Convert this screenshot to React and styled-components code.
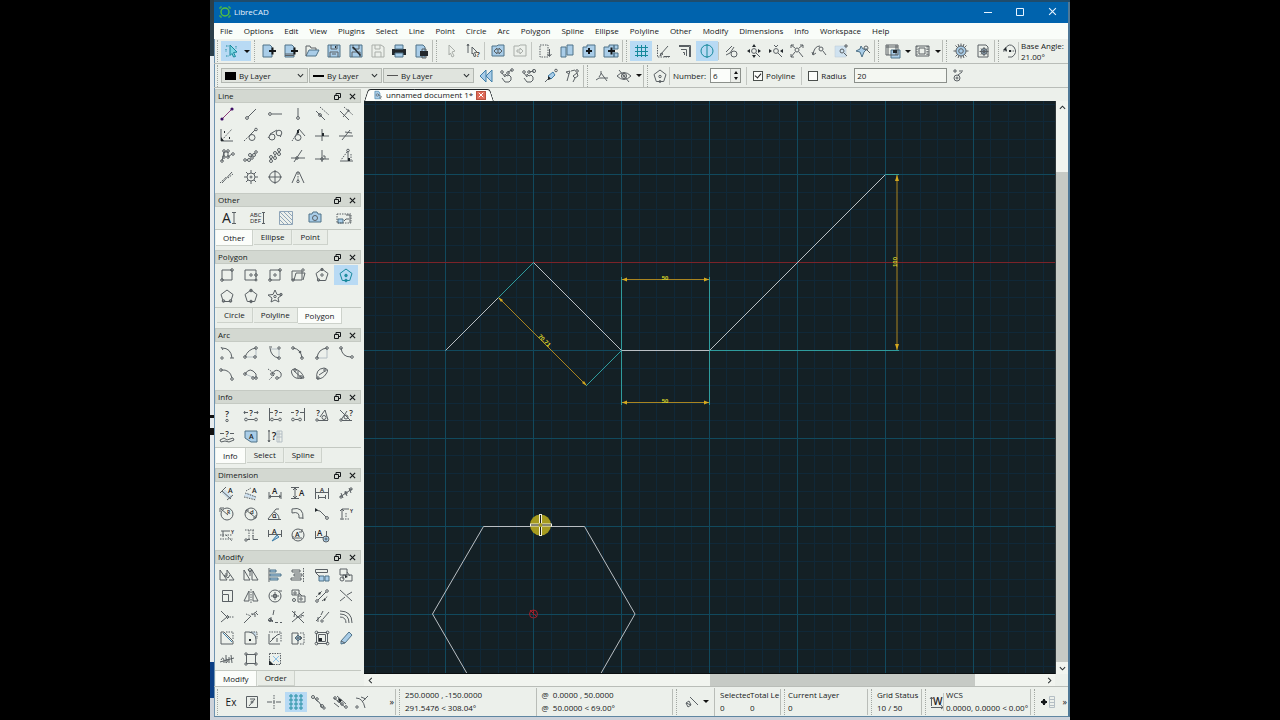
import React from "react";
import styled, { createGlobalStyle, css } from "styled-components";

const GlobalStyle = createGlobalStyle`
  * { box-sizing: border-box; }
  body { margin: 0; background: #000; }
  body, button, input, select {
    font-family: "Open Sans", "Noto Sans", sans-serif;
    font-size: 8px;
    line-height: 12px;
    color: #15181a;
  }
  button { border: 0; padding: 0; margin: 0; background: transparent; }
`;

/* ---------- icon drawings, on a 16 x 16 field ---------- */
/* s: strokes, w: heavy strokes, t: dotted strokes, b: blue shapes, g: blue strokes, k: solid shapes, c: circles */

const PENTAGON = "M8 2L14 6.5L11.7 13.5H4.3L2 6.5Z";
const DOC = "M2 2H9L11 4V14H2Z";
const DISK = "M2 2H14V14H2Z";

const ICONS = {
  cursor: { teal: 1, b: "M6 2L13 9L9.5 9.5L11.5 13.5L9.5 14L8 10.5L6 12.5Z", t: "M2 3H5M2 13H5M12 3V6M2 6V9" },
  newDoc: { b: DOC, w: "M8 8H15M11.5 4.5V11.5" },
  newTemplate: { b: DOC, s: "M2 11H11M2 12.5H11", w: "M8 8H15M11.5 4.5V11.5" },
  open: { b: "M2 13L5 7H15L12 13Z", s: "M2 13V3H6L7 5H12V7" },
  save: { b: DISK, pale: "M5 2H11V6H5Z", s: "M5 2V6H11V2M4 14V9H12V14M6 11H10", k: "M9 3H10V5H9Z" },
  saveAs: { b: DISK, s: "M4 14V9H12V14M5 2V6H11V2", k: "M4 4L6 4L13 12L12 13Z" },
  saveGray: { faint: 1, s: "M2 2H11L14 4V14H2ZM5 14V9H11V14M5 2V6H10V2" },
  print: { k: "M1 6H15V12H1Z", b: "M4 2H12V6H4ZM4 10H12V14H4Z" },
  preview: { b: "M3 2H10L12 4V14H3Z", k: "M7 8H15V13H7Z", s: "M9 8V6H13V8M9 13V15H13V13" },
  pointer: { faint: 1, s: "M6 2L12 8L9 9L11 13L9 14L7.5 10L6 12Z" },
  pointerAsk: { s: "M7 4L12 9L9.5 9.5L11 13L9 13.5L8 10L7 11ZM3 1V10M2 3L3 1L4 3", q: [13, 14, 7] },
  windowSwap: { b: "M2 3H7L8 2H14V13H2Z", s: "M4 8L7 5V7H9V5L12 8L9 11V9H7V11Z" },
  windowGray: { faint: 1, s: "M2 3H7L8 2H14V13H2ZM5 7H8V5L11 8L8 11V9H5Z" },
  selectArea: { t: "M3 2H11V14H3Z", s: "M12.5 6V13M10.5 11L12.5 13.5L14.5 11" },
  layers: { b: "M2 4H7V14H2ZM8 2H14V12H8Z" },
  layerAdd: { b: "M2 4H6V2H14V14H2Z", w: "M5 8H11M8 5V11" },
  layersAdd: { b: "M1 4H6V2H11V14H1ZM11 2H15V6H11ZM11 10H15V14H11Z", w: "M5 8H12M8.5 4.5V11.5" },
  grid: { teal: 1, s: "M4.5 2V14M8.5 2V14M12.5 2V14M2 4.5H15M2 8.5H15M2 12.5H15" },
  draft: { t: "M2.5 2V14H14", s: "M6 11L13 3M5 13L6 10L8 11ZM9 13.5H15" },
  lineWeight: { s: "M2 2.5H13.5V14M2 3.5H12.5V14M4 6.5H9.5V13M6 9.5H7.5V12" },
  halfCircle: { teal: 1, c: [[8, 8, 6]], s: "M8 1V15" },
  zoomRedraw: { s: "M2 9L8 3M2 12L6 10L10 4", c: [[10, 11, 3]] },
  zoomPan: { c: [[8, 8, 2.4]], s: "M10 10L14 14", k: "M8 1L10 4H6ZM1 8L4 6V10ZM15 8L12 6V10ZM8 15L10 12H6Z" },
  zoomIn: { c: [[8, 8, 2.4]], s: "M10 10L14 14M6 2L8 4L10 2", k: "M1 6L4 8L1 10ZM15 6L12 8L15 10Z" },
  zoomAuto: { c: [[8, 7, 2]], s: "M2 2L6 5M14 2L10 5M2 14L6 9M10 9L14 14M2 5V2H5M11 2H14V5M2 11V14H5" },
  zoomPrev: { c: [[10, 6, 2]], s: "M2 12Q3 3 9 3M12 8L15 12M2 12L1 9M2 12L5 10" },
  zoomWindow: { pale: "M2 3H13V14H2Z", c: [[9, 8, 2]], s: "M11 10L14 13M13 1V5M11 3H15" },
  zoomAll: { b: "M6 3L8 6H12L9 9L7 14L5 9L1 8L5 6Z", c: [[11, 5, 2]], s: "M12 7L15 10" },
  saveView: { s: "M1 2H13V12H1ZM3 2V12M11 2V12M1 4H13", b: "M6 7H15V15H6Z", k: "M8 7H12V10H8Z" },
  dockView: { s: "M1 3H14V13H1ZM4 5H10V11H4Z", t: "M2 3V13M12 3V13M13 3V13" },
  gear: { c: [[8, 8, 5], [8, 8, 2.3]], disc: [8, 8, 5], s: "M8 0.5V3M8 13V15.5M0.5 8H3M13 8H15.5M2.5 2.5L4.5 4.5M13.5 2.5L11.5 4.5M2.5 13.5L4.5 11.5M13.5 13.5L11.5 11.5M5 1L6 3.5M11 1L10 3.5M5 15L6 12.5M11 15L10 12.5" },
  docGear: { s: "M3 2H11L13 4V14H3ZM9 4V13M4.5 8.5H13.5M6 5.5L12 11.5M12 5.5L6 11.5", disc: [9, 8.5, 3], c: [[9, 8.5, 3], [9, 8.5, 1]] },
  angle: { s: "M3 6Q7 -1 12 4Q16 10 10 14L6 14", t: "M8 8H14M1 8H5", k: "M1 7L4 4L5 8ZM7 7H9V9H7Z" },

  back: { g: "M8 2L2 8L8 14ZM14 2L8 8L14 14Z" },
  handA: { s: "M3 5L6 9V6L8 8L10 7L12 9V12L10 14H6L3 10M9 4L13 2", c: [[3, 4, 1.3], [13, 2, 1.3], [9, 5, 1.3]] },
  handB: { s: "M3 5L6 9V6L8 8L10 7L12 9V12L10 14H6L3 10M8 4L13 3", c: [[3, 4, 1.3], [13, 3, 1.6], [8, 4, 1.3]] },
  pin: { g: "M5 8L10 4L12 7L8 11Z", s: "M2 14L7 9", c: [[13, 2.5, 1.3]], k: "M5 8L8 11L5 12Z" },
  pins: { s: "M2 4L6 3L5 6ZM5 6L3 13M9 8L13 5L14 8L11 10ZM11 10L9 14M7 3L11 2", c: [[13, 3, 1.3]] },
  cornerDot: { s: "M2 12L5 10H14M7 5L13 13M7 3V6M7 6L5 9" },
  eyeOff: { s: "M1 8Q8 1 15 8Q8 15 1 8M3 2L13 14", c: [[8, 8, 2.6], [8, 8, 1]] },
  pentagon: { s: PENTAGON, c: [[8, 8.5, 1.2], [8, 13.5, 1]] },
  plusMinus: { s: "M3 3H7M9 3H13M5 1V5M8 7L12 4", c: [[7, 10, 3], [7, 10, 1]] },

  line2p: { purple: 1, s: "M3 13L13 3", dots: [[3, 13, 1.6], [13, 3, 1.6]] },
  lineAngle: { s: "M5 11L13 3", c: [[4, 12, 1.4]] },
  lineH: { s: "M5 8H15", c: [[3, 8, 1.4]] },
  lineV: { s: "M8 2V11", c: [[8, 12, 1.4]] },
  parallel: { s: "M2 5L11 14", t: "M6 1L15 9", c: [[6, 9, 1.4]] },
  parallelPt: { s: "M2 5L11 14M5 11L11 4M9 4H11V6", t: "M6 1L15 9" },
  bisector: { s: "M2 2V14H14", t: "M3 13L13 2", k: "M2 10L5 14H2ZM5 4H6V6H5ZM10 10H11V12H10Z" },
  tangent: { c: [[9, 10.5, 3], [13, 2.5, 1.3]], s: "M6 9L12 3", t: "M1 14L6 9" },
  tangent2: { c: [[5, 10, 3], [12, 6, 2.8]], s: "M3 7L10 3", t: "M1 11L4 7M13 10L15 8" },
  tangentOrt: { c: [[8, 10.5, 3]], s: "M6 8L9 2L15 9", t: "M2 14L6 8", k: "M7 3H9V6L7 7Z" },
  orthogonal: { s: "M8 2V14M1 9H15", k: "M8 6H10V9H8Z" },
  relAngle: { s: "M1 9H15M4 13L12 3M7 5L14 6" },
  polyline: { s: "M3 13L5 4M5 4V9M5 4H9V9M9 9L13 6", c: [[3, 13, 1.3], [5, 3, 1.3], [9, 3, 1.3], [9, 9, 1.3], [14, 6, 1.3], [5, 9, 1.3]] },
  chain: { s: "M3 12H5M8 8L9 9M11 6L12 5", c: [[2, 12, 1.3], [6, 12, 1.5], [7, 7, 1.5], [11, 7, 1.5], [13, 4, 1.3], [9, 10, 1.3]] },
  chain2: { s: "M4 12V10M8 9V7M12 5V3", c: [[4, 13, 1.5], [4, 9, 1.5], [8, 10, 1.5], [8, 5, 1.5], [12, 6, 1.5], [12, 2, 1.5]] },
  crossLine: { s: "M1 10H15M4 14L12 2", c: [[7, 10, 1.3]] },
  crossOrt: { s: "M8 2V14M1 11H15M9 8H11V11", c: [[8, 11, 1.3]] },
  perpendicular: { s: "M10 3V13M2 13H15", t: "M9 4L3 12M13 6V12", c: [[10, 2.5, 1.3]], k: "M10 10H12V13H10Z" },
  freeLine: { s: "M3 14L13 3", t: "M1 14L7 8M9 9L14 5" },
  sun: { c: [[8, 8, 4], [8, 8, 1]], s: "M8 1V4M8 12V15M1 8H4M12 8H15M3 3L5 5M13 3L11 5M3 13L5 11M13 13L11 11" },
  target: { c: [[8, 8, 5.5]], s: "M8 1V15M1 8H15" },
  compass: { s: "M2 14L7 3H9L14 14M8 3V6", t: "M8 7V12", c: [[8, 12.5, 1.2]] },

  textA: { thin: 1, letter: ["A", 1, 13, 14], s: "M11 2.5H15M13 2V14M11 13.5H15" },
  mtext: { thin: 1, letter: ["ABC", 0, 7, 6], letter2: ["DEF", 0, 13, 6], s: "M12 2.5H15M13.5 2V14M12 13.5H15" },
  hatch: { soft: 1, s: "M1.5 1.5H14.5V14.5H1.5ZM2 2L14 14M6 2L14 10M10 2L14 6M2 6L10 14M2 10L6 14" },
  camera: { b: "M2 4H5L6 2H10L11 4H14V12H2Z", c: [[8, 8, 2.5]] },
  insert: { t: "M1 4H15V13H1Z", b: "M2 9H7V13H2Z", s: "M10 5H14M14 5V13M8 11L10 9H13" },

  rect: { s: "M3 3H13V13H3Z", c: [[13, 3, 1.3], [3, 13, 1.3]] },
  rectCenter: { s: "M2 3H13V13H2Z", c: [[8, 8, 1.2], [13, 8, 1.3], [13, 13, 1]] },
  rectDot: { s: "M3 3H13V13H3Z", c: [[8, 8, 1.2], [13, 3, 1.3], [3, 13, 1.3]] },
  rectSlant: { s: "M2 4H12V13H2ZM4 13L6 6H15L13 13", c: [[13, 3, 1.2], [3, 13, 1.2]] },
  polyCorner: { s: PENTAGON, c: [[8, 8, 1.2], [8, 2.5, 1.2], [4.5, 13, 1.2]] },
  polyActive: { teal: 1, s: PENTAGON, c: [[8, 8.5, 1.3], [8, 13.5, 1.3]], dots: [[8, 8.5, 1]] },
  polySide: { s: PENTAGON, c: [[4.5, 13, 1.3], [11.5, 13, 1.3]] },
  polyVert: { s: PENTAGON, c: [[8, 2.5, 1.3], [8, 13.5, 1.3]] },
  star: { s: "M8 2L10 6.5L15 7L11 10L12 14L8 12L4 14L5 10L1 7L6 6.5Z", c: [[8, 8.5, 1.2], [14, 6.5, 1.2]] },

  arc1: { s: "M3 3Q12 3 13 13M2 2L4 5M11 13H15", c: [[3, 13, 1.2]] },
  arc2: { s: "M2 12Q5 4 13 3", faintLine: "M2 12H13V4", c: [[13, 3, 1.3], [12, 12, 1.3], [2, 12, 1.3]] },
  arc3: { s: "M3 3Q4 12 12 13M2 2H5", faintLine: "M4 4H12V11", c: [[12, 3, 1.2], [12, 13, 1.3]] },
  arc4: { s: "M3 3Q11 4 12 13", c: [[3, 3, 1.3], [12, 13, 1.3]], dots: [[10, 7, 1.3]] },
  arc5: { s: "M3 13Q4 4 13 3", faintLine: "M3 13H13V4", c: [[13, 3, 1.3], [3, 13, 1.3]] },
  arc6: { s: "M3 3Q4 12 13 12", c: [[3, 3, 1.3], [14, 12, 1.3]] },
  arc7: { s: "M2 4Q11 3 13 12", c: [[2, 4, 1.3], [13, 13, 1.3]] },
  arc8: { s: "M2 8Q7 0 13 8L13 12", faintLine: "M2 8L12 12", c: [[2, 8, 1.3], [13, 12, 1.3], [10, 12, 1.3]] },
  arc9: { s: "M5 8Q9 1 14 7Q15 12 11 12", t: "M1 3L8 8L2 14", c: [[5, 8, 1.3], [10, 12, 1.3]] },
  arc10: { s: "M2 8Q0 3 5 3Q12 5 14 12Q4 14 2 8M4 5L12 12M8 5V12", c: [[5, 4, 1.3], [11, 11, 1.3]] },
  arc11: { s: "M3 13Q1 3 10 2Q16 3 12 8Q9 13 3 13M5 9L11 5", c: [[11, 4, 1.2], [4, 12, 1.2]] },

  ask: { q: [8, 10, 9], c: [[8, 13.5, 1.2]] },
  askDist: { q: [8, 9, 8], s: "M5 12.5H11M1 5.5H5M11 5.5H15M2 4L1 5.5L2 7M14 4L15 5.5L14 7", c: [[3, 12.5, 1.4], [13, 12.5, 1.4]] },
  askLeft: { q: [9, 9, 8], s: "M2.5 1V14M3 5.5H6M7 12.5H11M12 5.5H15", c: [[5, 12.5, 1.4], [13, 12.5, 1.4]] },
  askRight: { q: [7, 9, 8], s: "M14.5 1V14M10 5.5H14M5 12.5H8M1 5.5H4", c: [[3, 12.5, 1.4], [10, 12.5, 1.4]] },
  askAngle: { q: [4, 9, 8], s: "M4 13.5H14M6 10L11 3L14 13", c: [[3, 13, 1.2], [10, 10.5, 2]] },
  askAngle2: { q: [13, 9, 8], s: "M2 3L12 13M3 13L9 4M4 13.5H14", c: [[3, 13, 1.2], [8, 10, 2]] },
  askArea: { q: [8, 9, 8], s: "M1 12L5 10L8 12L14 10L15 12L10 14L6 13L2 14ZM1 5.5H5M11 5.5H15" },
  askBlue: { b: "M2 3H14V14H8L2 10Z", letter: ["A", 6, 11, 7] },
  askList: { q: [7, 12, 10], s: "M2 2V14M1 12L2 14L3 12M1 3H3", faintLine: "M10 3H15V14H10ZM10 6H15M10 9H15M12 3V14" },

  dimAlign: { letter: ["A", 9, 8, 7], pale: "M3 8L6 5L13 12L10 14Z", s: "M1 8L7 2M3 6L12 14M8 15L14 10" },
  dimAlign2: { letter: ["A", 9, 8, 7], pale: "M1 11L4 8L13 12L12 14Z", t: "M2 8L13 12M3 6L8 3M1 12L13 15" },
  dimH: { letter: ["A", 5, 9, 8], s: "M2 7V14M14 7V14M2 11.5H14M4 10L2 11.5L4 13M12 10L14 11.5L12 13" },
  dimV: { letter: ["A", 9, 11, 8], s: "M1 2.5H9M1 13.5H9M5 3V13M3 5L5 3L7 5M3 11L5 13L7 11" },
  dimBase: { letter: ["A", 6, 7, 6], s: "M1.5 3V14M14.5 3V14M1 7.5H15M4.5 10V14M11.5 10V14M4 12.5H12" },
  dimCont: { s: "M2 12L14 4M3 8L5 13M7 6L9 11M11 3L13 8", c: [[3, 12, 1.2], [13, 4, 1.2], [8, 8, 1.2]] },
  dimRadius: { c: [[8, 8, 6]], s: "M2 3L9 9M1 6V2H5", letter: ["R", 8, 8, 5] },
  dimDia: { c: [[8, 8, 6]], s: "M3 4L13 12M3 7V4H6M10 12H13V9", letter: ["d", 7, 8, 6] },
  dimAngle: { s: "M1 13.5H14M1 13L9 3M7 6Q12 8 12 13M9 3H12", letter: ["α", 5, 12, 7] },
  dimArc: { s: "M2 3Q14 0 13 13M2 7Q10 5 9 12M2 3V7M9 12H13" },
  leader: { s: "M1 4L6 5L12 11", c: [[13, 12, 1.4]], k: "M1 2L4 4L1 6Z" },
  ordinate: { s: "M4 14V3H11M2 5L4 3L6 5", t: "M2 13H12M8 7V12", letter: ["Y", 12, 7, 5] },
  ordinate2: { s: "M2 4H11M4 4V10", t: "M1 8H13M1 12H14M7 8L13 14", letter: ["Y", 12, 7, 5] },
  ordinate3: { t: "M2 3H12M6 3V13M10 3V9", s: "M10 8V12.5H15M4 12.5H7", c: [[3, 13, 1.2]] },
  dimEdit: { letter: ["A", 5, 7, 7], s: "M1.5 3V10M14.5 3V10M1 7.5H15", g: "M5 14L10 8L12 10L7 13Z" },
  dimCycle: { letter: ["A", 5, 10, 7], c: [[8, 8, 6]], s: "M4 11H12M12 2V5H9M3 12V9" },
  dimGear: { letter: ["A", 3, 9, 8], s: "M1.5 4V12M12.5 4V10M1 10.5H9", disc: [12, 12, 3], c: [[12, 12, 3], [12, 12, 1]] },

  move: { s: "M1 3V13H8ZM8 3V9M8 3L15 13H10M5 8L9 11L11 8M7 6V10" },
  copyTo: { s: "M1 3V13H7ZM9 3L15 13H9ZM5 2L7 5L9 2M7 5V9", c: [[7, 3, 1.5]] },
  alignLeft: { b: "M3 3H9V5H3ZM3 7H14V9H3ZM3 11H11V13H3Z", s: "M2 1V15" },
  alignRight: { s: "M2 3H10V5H2ZM4 7H12V9H4ZM1 11H11V13H1Z", t: "M13.5 1V15" },
  alignRef: { s: "M1.5 2.5H13.5V5.5H1.5ZM2 6L6 10", b: "M5 9H10V14H5ZM11 9H15V14H11Z" },
  shapes: { s: "M2 2H9V8H2ZM5 12V8H14V14H7M9 5L12 9", c: [[4, 12, 2]], k: "M7 8L10 10L7 11Z" },
  scale: { s: "M3.5 2.5H13.5V13.5H3.5M3.5 6.5H9.5V13.5H3.5ZM3.5 2.5V6" },
  mirror: { s: "M1 13L6 3V13ZM15 13L10 3V13Z", t: "M8 1V15" },
  rotate: { c: [[8, 8, 6]], s: "M4 8H12M8 4V12M6.5 6.5H9.5V9.5H6.5ZM12 3H15" },
  shapes2: { s: "M2 2H9V7H2ZM8 8H15V14H8ZM9 5L12 8", c: [[5, 5, 1.2], [4, 12, 1.5], [11, 11, 1.2]] },
  revert: { s: "M4 12L12 4", t: "M2 9L8 3M8 13L14 8", c: [[3, 13, 1.3], [13, 3, 1.3]], k: "M4 5L7 4L6 7ZM9 12L12 10L11 13Z" },
  trim: { s: "M2 2L14 13M2 13L7 9M9 7L14 4" },
  trim2: { s: "M2 2L8 8L2 13M8 6L10 8L8 10", t: "M8 8H15" },
  lengthen: { s: "M1 14L8 7M8 5H12V8M12 3L15 6", t: "M3 5L8 7M9 6L14 2" },
  offset: { s: "M7 1L6 6M2 9L6 13M4 8V13M1 11.5H6M8 13.5H11M13 13.5H15", c: [[3, 11, 1.5]] },
  stretch: { s: "M2 2L14 14M2 13L14 3M5 2L4 8M11 6L14 7M6 8H12" },
  divide: { s: "M2 12L7 7M9 10L15 3M7 6L9 2M4 8V13", c: [[8, 12, 1.2]] },
  parallelArc: { s: "M2 2Q14 2 14 14M2 5Q11 5 11 14M2 8Q8 8 8 14" },
  bevel: { g: "M4 3L13 12", s: "M2 2H5L14 11V14H2Z", t: "M7 2H14V9" },
  round: { pale: "M6 2H13V9Q12 3 6 2Z", s: "M2 2H6Q13 3 13 10V14H2Z", k: "M6 9H8V11H6Z", t: "M8 2H14V9" },
  explode: { s: "M2 4V14H13M3 12L10 5L13 4M5 9L8 7M10 8V12", t: "M2 2H14V12" },
  splitBox: { s: "M2 3H8V14H2ZM5 8H12M10 6L12 8L10 10", b: "M8 5L11 8L8 11L5 8Z", t: "M10 3H14V14H10" },
  boxDots: { s: "M3 2.5H13M3 13.5H13M2.5 3V13M13.5 3V13M4.5 4.5H11.5V11.5H4.5Z", c: [[2.5, 2.5, 1.4], [13.5, 2.5, 1.4], [2.5, 13.5, 1.4], [13.5, 13.5, 1.4]], k: "M5 8H8V11H5Z" },
  eraser: { b: "M3 11L11 2L14 5L7 13L3 14Z", s: "M3 11L7 13" },
  textPath: { s: "M2 9Q4 5 5 9V12M7 4V12Q11 9 7 8M10 6V12M12 4L13 12M1 11L15 7" },
  boxNodes: { s: "M3.5 3.5H12.5V12.5H3.5Z", c: [[3, 3, 1.2], [13, 3, 1.2], [3, 13, 1.2], [13, 13, 1.2]] },
  boxCross: { t: "M2.5 2.5H13.5V13.5H2.5Z", sky: "M6 5L12 11M12 5L6 11", k: "M2 9L7 14H2Z" },

  snapBox: { s: "M2.5 2.5H13.5V13.5H2.5ZM5 12L11 5M6 5H11", c: [[8, 8, 1]] },
  snapCross: { t: "M8 1V15", s: "M1 8H6M10 8H15M8 7V9" },
  snapGrid: { teal: 1, c: [3, 8, 13].flatMap((x) => [2, 6, 10, 14].map((y) => [x, y, 1.2])) },
  snapEnd: { s: "M4 3L7 7L9 8L12 13", c: [[3, 3, 1.5], [7, 5, 1.3], [12, 12, 1.5], [14, 14, 1.2]] },
  snapEntity: { s: "M2 4L13 13M5 2L14 10M2 9L7 13", c: [[3, 4, 1.3], [7, 7, 1.3], [10, 10, 1.3], [14, 13, 1.3]], k: "M6 4L10 6L8 9Z" },
  snapMid: { s: "M2 4Q9 4 11 14M14 2L8 8M7 3L12 5", c: [[3, 13, 1.2]] },
  snapNone: { s: "M7 3L15 11M3 9L6 7L8 11L5 13ZM3 9L8 11" },
  wcs: { s: "M2.5 12V3M2 13.5H14M1 5L2.5 3L4 5M12 11L14 13.5L12 15", letter: ["W", 4, 11, 10] },
  addList: { w: "M1 8H7M4 5V11", k: "M4 5L7 8L4 11L1 8Z", faintLine: "M9.5 2.5H14.5V13.5H9.5ZM9 5.5H15M9 8.5H15M9 11.5H15" },
  docTab: { g: "M3 2H9L11 5V14H3Z", s: "M8 7L14 11L11 12L13 15", c: [[7, 8, 2]] },
};

const IconSvg = styled.svg`
  overflow: visible;
`;

function Icon({ name, size = 16 }) {
  const i = ICONS[name];
  const ink = i.teal ? "#16899c" : i.purple ? "#8a3a78" : i.faint ? "#a9aea9" : i.soft ? "#8fa5b8" : "#5a6064";
  const blue = "#a9cde8";
  const circle = ([x, y, r], k, fill) => <circle key={k} cx={x} cy={y} r={r} fill={fill} />;
  return (
    <IconSvg width={size} height={size} viewBox="0 0 16 16" fill="none" stroke={ink} strokeWidth="1" aria-hidden="true">
      {i.pale && <path d={i.pale} fill="#cfe2f0" stroke="#b9c9d4" strokeWidth="0.5" />}
      {i.faintLine && <path d={i.faintLine} stroke="#b4bec4" />}
      {i.disc && <circle cx={i.disc[0]} cy={i.disc[1]} r={i.disc[2]} fill={blue} stroke="none" />}
      {i.k && name === "print" && <path d={i.k} fill="#22282c" stroke="none" />}
      {i.b && <path d={i.b} fill={i.teal ? "#7fd6e4" : blue} stroke={i.teal ? ink : "#4f7288"} />}
      {i.g && <path d={i.g} fill={blue} stroke="#3f7ea8" />}
      {i.sky && <path d={i.sky} stroke="#8cc0e6" />}
      {i.s && <path d={i.s} />}
      {i.t && <path d={i.t} strokeDasharray="1.5 1" />}
      {i.c && i.c.map((c, k) => circle(c, k, "none"))}
      {i.dots && <g fill={i.purple ? "#3d0d66" : ink} stroke="none">{i.dots.map((c, k) => circle(c, k))}</g>}
      {i.k && name !== "print" && <path d={i.k} fill="#22282c" stroke="none" />}
      {i.w && <path d={i.w} stroke="#14181a" strokeWidth="2" />}
      <g fill="#1d2225" stroke="none" fontFamily="Open Sans, sans-serif" fontWeight={i.thin ? 400 : 600}>
        {i.q && <text x={i.q[0]} y={i.q[1]} fontSize={i.q[2]} textAnchor="middle">?</text>}
        {i.letter && <text x={i.letter[1]} y={i.letter[2]} fontSize={i.letter[3]}>{i.letter[0]}</text>}
        {i.letter2 && <text x={i.letter2[1]} y={i.letter2[2]} fontSize={i.letter2[3]}>{i.letter2[0]}</text>}
      </g>
    </IconSvg>
  );
}

/* ---------- window frame ---------- */

const Screen = styled.div`
  display: flex;
  height: 100vh;
  min-height: 720px;
  padding: 0 210px;
  background: #000;
`;
const Backdrop = styled.div`
  flex: 0 0 4px;
  display: flex;
  flex-direction: column;
  background: #e9edf0;
`;
const BackdropBand = styled.div`
  height: ${(p) => p.$h}px;
  background: ${(p) => p.$color};
`;
const Frame = styled.div`
  flex: 1;
  min-width: 0;
  display: flex;
  flex-direction: column;
  border-top: 2px solid #1f4c6c;
  border-bottom: 3px solid #cdd2da;
  background: #ecf0eb;
`;
const FrameInner = styled.div`
  flex: 1;
  min-height: 0;
  display: flex;
  flex-direction: column;
  border-right: 2px solid #4f7896;
  border-bottom: 1px solid #5f86a2;
  box-shadow: inset 1px 0 #6e93b0;
`;
const TitleBar = styled.header`
  display: flex;
  align-items: center;
  height: 21px;
  padding: 0 0 2px 5px;
  background: #0063ad;
  color: #e8f4ff;
`;
const AppTitle = styled.h1`
  flex: 1;
  margin: 0 0 0 3px;
  font-size: 8px;
  font-weight: 400;
  line-height: 12px;
`;
const CaptionButton = styled.button`
  width: 32px;
  height: 18px;
  display: grid;
  place-items: center;
`;
const MenuBar = styled.nav`
  display: flex;
  align-items: center;
  gap: 11px;
  height: 16px;
  padding-left: 6px;
  background: #f9fdf9;
`;
const MenuItem = styled.button`
  white-space: nowrap;
`;

/* ---------- toolbars ---------- */

const ToolBar = styled.div`
  display: flex;
  align-items: center;
  height: ${(p) => p.$h}px;
  border-bottom: 1px solid #b9bdb8;
  white-space: nowrap;
`;
const Handle = styled.span`
  flex: none;
  width: ${(p) => (p.$edge ? 8 : 7)}px;
  height: ${(p) => p.$h || 22}px;
  border-left: ${(p) => (p.$edge ? "1px solid #b9bdb8" : "0")};
  &::before {
    content: "";
    display: block;
    height: 100%;
    margin-left: 3px;
    border-left: 1px dotted #a3a8a3;
  }
`;
const Divider = styled.span`
  flex: none;
  width: 3px;
  height: ${(p) => p.$h || 18}px;
  border-left: 1px solid #c3c7c2;
`;
const Group = styled.div`
  flex: none;
  display: grid;
  grid-template-columns: repeat(${(p) => p.$n}, 1fr);
  width: ${(p) => p.$w}px;
`;
const ToolButton = styled.button`
  display: grid;
  place-items: center;
  width: 100%;
  height: ${(p) => p.$h || 20}px;
  font-size: ${(p) => (p.$label ? 10 : 8)}px;
  ${(p) => p.$on && css`background: #b8daf4;`}
`;
const DropButton = styled.button`
  flex: none;
  width: 8px;
  height: 20px;
  display: grid;
  place-items: center;
  ${(p) => p.$on && css`background: #b8daf4;`}
`;
const Triangle = styled.span`
  border: 3px solid transparent;
  border-top-color: #111;
  border-bottom: 0;
`;
const TwoLine = styled.div`
  line-height: 11px;
`;
const Combo = styled.div`
  flex: none;
  display: flex;
  align-items: center;
  width: ${(p) => p.$w}px;
  height: 15px;
  margin-right: 1px;
  padding: 0 3px;
  border: 1px solid #b3b8b2;
  background: #e0e4de;
`;
const Swatch = styled.span`
  flex: none;
  width: 11px;
  height: ${(p) => p.$h}px;
  background: ${(p) => p.$color || "#000"};
`;
const ComboSelect = styled.select`
  flex: 1;
  min-width: 0;
  height: 13px;
  margin: 0;
  padding: 0 0 0 3px;
  appearance: none;
  border: 0;
  background: transparent;
`;
const Field = styled.label`
  display: flex;
  align-items: center;
  gap: ${(p) => (p.$tick ? 3 : 4)}px;
  margin: ${(p) => (p.$tick ? "0 6px 0 4px" : "0 5px 0 1px")};
`;
const Tick = styled.input`
  appearance: none;
  width: 10px;
  height: 10px;
  margin: 0;
  border: 1px solid #4a4f4c;
  background: #fbfdfa;
  &:checked::before {
    content: "";
    display: block;
    width: 3px;
    height: 5px;
    margin: 0 0 0 2px;
    border: solid #222;
    border-width: 0 1px 1px 0;
    transform: rotate(40deg);
  }
`;
const TextBox = styled.input`
  width: 93px;
  height: 15px;
  margin: 0 0 0 2px;
  padding: 0 2px;
  border: 1px solid #8b908b;
  border-radius: 0;
  background: #f4f7f2;
`;
const Spinner = styled.span`
  display: flex;
  width: 31px;
  height: 15px;
  border: 1px solid #8b908b;
  background: #fbfdfa;
`;
const SpinInput = styled.input`
  flex: 1;
  min-width: 0;
  width: 20px;
  padding: 0 2px;
  border: 0;
  background: transparent;
`;
const SpinArrows = styled.span`
  display: grid;
  grid-template-rows: 1fr 1fr;
  width: 10px;
  border-left: 1px solid #b9bdb8;
  background: #ebeee9;
`;
const SpinButton = styled.button`
  display: grid;
  place-items: center;
  &:first-child ${Triangle} { transform: rotate(180deg); }
  ${Triangle} { border-width: 3px 2px 0; }
`;

/* ---------- docks ---------- */

const Body = styled.div`
  flex: 1;
  min-height: 0;
  display: flex;
`;
const DockArea = styled.aside`
  flex: 0 0 150px;
  display: flex;
  flex-direction: column;
  gap: 4px;
  padding: 1px 3px 0 1px;
`;
const DockSection = styled.section`
  flex: none;
  padding-bottom: ${(p) => (p.$roomy ? 1 : 0)}px;
`;
const DockHeader = styled.div`
  display: flex;
  align-items: center;
  height: 14px;
  padding: 0 4px 0 2px;
  border: 1px solid #c5cac3;
  background: #d3d8d1;
`;
const DockTitle = styled.h2`
  flex: 1;
  margin: 0;
  font-size: 8px;
  font-weight: 400;
  line-height: 12px;
`;
const DockButton = styled.button`
  width: 8px;
  height: 10px;
  margin-left: 7px;
  display: grid;
  place-items: center;
`;
const DockTools = styled.div`
  display: grid;
  grid-template-columns: repeat(${(p) => p.$cols}, 1fr);
  grid-auto-rows: 21px;
  padding: 1px 3px 0 0;
`;
const TabRow = styled.div`
  display: flex;
  height: 17px;
  padding-left: 1px;
  border-top: 1px solid #c3c8c1;
`;
const DockTab = styled.button`
  height: ${(p) => (p.$on ? 16 : 15)}px;
  padding: 0 7px;
  margin-left: ${(p) => (p.$on ? 0 : 1)}px;
  border: solid #cdd2cb;
  border-width: 0 1px 1px 0;
  background: ${(p) => (p.$on ? "#fbfdfa" : "#e9ede7")};
`;

/* ---------- document area ---------- */

const Documents = styled.main`
  flex: 1;
  min-width: 0;
  display: flex;
  flex-direction: column;
`;
const DocTabs = styled.div`
  height: 13px;
  padding: 1px 0 0 2px;
  display: flex;
`;
const DocTab = styled.div`
  position: relative;
  display: flex;
  align-items: center;
  gap: 3px;
  height: 12px;
  padding: 0 6px 0 7px;
  isolation: isolate;
  &::before, &::after {
    content: "";
    position: absolute;
    z-index: -1;
    top: 0;
    bottom: 0;
    border-top: 1px solid #1c2225;
    background: #fcfefb;
  }
  &::before {
    left: 0;
    right: 40%;
    border-left: 1px solid #1c2225;
    border-top-left-radius: 3px;
    transform: skewX(-18deg);
  }
  &::after {
    left: 40%;
    right: 0;
    border-right: 1px solid #1c2225;
    border-top-right-radius: 3px;
    transform: skewX(18deg);
  }
`;
const CloseDoc = styled.button`
  display: grid;
  place-items: center;
  width: 10px;
  height: 9px;
  border: 1px solid #b9533f;
  background: #df6a57;
`;
const ViewGrid = styled.div`
  flex: 1;
  min-height: 0;
  display: grid;
  grid-template: minmax(0, 1fr) 12px / minmax(0, 1fr) 13px;
`;
const Drawing = styled.svg`
  width: 100%;
  height: 100%;
  background: #142025;
  border-bottom: 1px solid #0a0f11;
`;
const ScrollTrack = styled.div`
  display: flex;
  flex-direction: ${(p) => (p.$v ? "column" : "row")};
  background: #f1f4ef;
  border-left: ${(p) => (p.$v ? "1px solid #30383b" : "0")};
`;
const ScrollButton = styled.button`
  flex: none;
  width: 12px;
  height: 12px;
  display: grid;
  place-items: center;
`;
const ScrollSpace = styled.div`
  flex: ${(p) => p.$f};
`;
const ScrollThumb = styled.div`
  flex: ${(p) => p.$f};
  background: #c6cac5;
`;

/* ---------- status bar ---------- */

const StatusBar = styled.footer`
  display: flex;
  align-items: center;
  height: 30px;
  border-top: 1px solid #b9bdb8;
  white-space: nowrap;
`;
const More = styled.button`
  flex: none;
  width: ${(p) => p.$w}px;
  height: 20px;
  padding-right: 1px;
  text-align: right;
  font-size: 9px;
`;
const StatusCell = styled.div`
  flex: ${(p) => (p.$grow ? "1 1" : "0 0")} ${(p) => p.$w}px;
  height: 28px;
  padding-left: ${(p) => p.$pad || 0}px;
  line-height: 13px;
  overflow: hidden;
  border-right: ${(p) => (p.$line ? "1px solid #b9bdb8" : "0")};
`;
const Counts = styled.table`
  border-spacing: 0;
  table-layout: fixed;
  width: 60px;
  line-height: 13px;
  text-align: left;
  th, td { padding: 0; font-weight: 400; overflow: hidden; }
`;

/* ---------- small glyphs ---------- */

const Cross = ({ color = "#15181a", size = 7, w = 1.3 }) => (
  <svg width={size} height={size} viewBox="0 0 8 8" stroke={color} strokeWidth={w} aria-hidden="true">
    <path d="M1 1L7 7M7 1L1 7" />
  </svg>
);
const Float = () => (
  <svg width="7" height="7" viewBox="0 0 7 7" fill="none" stroke="#15181a" aria-hidden="true">
    <path d="M2 2V0.5H6.5V4.5H5M0.5 2.5H4.5V6.5H0.5Z" />
  </svg>
);
const Chevron = ({ turn = 0 }) => (
  <svg width="7" height="7" viewBox="0 0 8 8" fill="none" stroke="#2a2f31" strokeWidth="1.2" transform={`rotate(${turn})`} aria-hidden="true">
    <path d="M1 2.5L4 5.5L7 2.5" />
  </svg>
);
const Logo = () => (
  <svg width="12" height="12" viewBox="0 0 12 12" fill="none" stroke="#55c23c" aria-hidden="true">
    <circle cx="6" cy="6" r="4" strokeWidth="1.4" />
    <path d="M1 3V1H3M9 1H11V3M11 9V11H9M3 11H1V9" />
  </svg>
);

const Tools = ({ names, w, on, h }) => (
  <Group $n={names.length} $w={w}>
    {names.map((n) => (
      <ToolButton key={n} aria-label={n} $on={n === on} $h={h}>
        <Icon name={n} />
      </ToolButton>
    ))}
  </Group>
);
const Drop = ({ on }) => (
  <DropButton aria-label="more" $on={on}><Triangle /></DropButton>
);

/* ---------- data ---------- */

const MENUS = ["File", "Options", "Edit", "View", "Plugins", "Select", "Line", "Point", "Circle", "Arc", "Polygon", "Spline", "Ellipse", "Polyline", "Other", "Modify", "Dimensions", "Info", "Workspace", "Help"];

const DOCKS = [
  { title: "Line", roomy: true, tools: ["line2p", "lineAngle", "lineH", "lineV", "parallel", "parallelPt", "bisector", "tangent", "tangent2", "tangentOrt", "orthogonal", "relAngle", "polyline", "chain", "chain2", "crossLine", "crossOrt", "perpendicular", "freeLine", "sun", "target", "compass"] },
  { title: "Other", cols: 5, tools: ["textA", "mtext", "hatch", "camera", "insert"], tabs: ["Other", "Ellipse", "Point"] },
  { title: "Polygon", on: "polyActive", tools: ["rect", "rectCenter", "rectDot", "rectSlant", "polyCorner", "polyActive", "polySide", "polyVert", "star"], tabs: ["Circle", "Polyline", "Polygon"] },
  { title: "Arc", roomy: true, tools: ["arc1", "arc2", "arc3", "arc4", "arc5", "arc6", "arc7", "arc8", "arc9", "arc10", "arc11"] },
  { title: "Info", tools: ["ask", "askDist", "askLeft", "askRight", "askAngle", "askAngle2", "askArea", "askBlue", "askList"], tabs: ["Info", "Select", "Spline"] },
  { title: "Dimension", tools: ["dimAlign", "dimAlign2", "dimH", "dimV", "dimBase", "dimCont", "dimRadius", "dimDia", "dimAngle", "dimArc", "leader", "ordinate", "ordinate2", "ordinate3", "dimEdit", "dimCycle", "dimGear"] },
  { title: "Modify", tools: ["move", "copyTo", "alignLeft", "alignRight", "alignRef", "shapes", "scale", "mirror", "rotate", "shapes2", "revert", "trim", "trim2", "lengthen", "offset", "stretch", "divide", "parallelArc", "bevel", "round", "explode", "splitBox", "boxDots", "eraser", "textPath", "boxNodes", "boxCross"], tabs: ["Modify", "Order"] },
];

function Dock({ title, tools, tabs, on, roomy, cols = 6 }) {
  return (
    <DockSection $roomy={roomy}>
      <DockHeader>
        <DockTitle>{title}</DockTitle>
        <DockButton aria-label="float"><Float /></DockButton>
        <DockButton aria-label="close"><Cross /></DockButton>
      </DockHeader>
      <DockTools $cols={cols}>
        {tools.map((n) => (
          <ToolButton key={n} aria-label={n} $on={n === on}>
            <Icon name={n} />
          </ToolButton>
        ))}
      </DockTools>
      {tabs && (
        <TabRow>
          {tabs.map((t) => <DockTab key={t} $on={t === title}>{t}</DockTab>)}
        </TabRow>
      )}
    </DockSection>
  );
}

/* The sheet: grid lines every 10 units, heavier ones every 50. */
const STEP = 87.9;
const ORIGIN = { x: 169.6, y: 161.6 };
const lines = (origin, count) =>
  Array.from({ length: count }, (_, i) => {
    const n = i - 10;
    return { at: Math.floor(origin + (n * STEP) / 5), major: n % 5 === 0 };
  }).filter((l) => l.at >= 0);

function Sheet() {
  const cols = lines(ORIGIN.x, 140);
  const rows = lines(ORIGIN.y, 90);
  const color = (l) => (l.major ? "#11495d" : "#102838");
  return (
    <Drawing role="img" aria-label="drawing">
      <g shapeRendering="crispEdges">
        {[false, true].map((major) => (
          <g key={String(major)}>
            {cols.filter((l) => l.major === major).map((l) => (
              <rect key={"c" + l.at} x={l.at} y="0" width="1" height="100%" fill={color(l)} />
            ))}
            {rows.filter((l) => l.major === major).map((l) => (
              <rect key={"r" + l.at} x="0" y={l.at} width="100%" height="1" fill={color(l)} />
            ))}
          </g>
        ))}
        <rect x="0" y="161" width="100%" height="1" fill="#7b2329" />
      </g>
      <g fill="none" stroke="#b9bfc4">
        <path d="M81.5 249.5L169.5 161.5L257.5 249.5H345.5L521.5 73.5" />
        <path d="M119.5 425.5H220.5L271 513L220.5 601H119.5L68.5 513Z" />
      </g>
      <g fill="none" stroke="#2f9c9d">
        <path d="M169.5 161.5L134 197M257.5 249.5L222 285" />
        <path d="M257.5 176V304M345.5 176V304M345.5 249.5H535M521.5 73.5H535" />
      </g>
      <path d="M257.5 249.5H345.5" stroke="#b9bfc4" />
      <g fill="none" stroke="#a98420">
        <path d="M258 178.5H345M258 301.5H345M533 74V249M135 197L222 284" />
      </g>
      <g fill="#d6a91e">
        <path d="M258 178.5l5-2v4zM345 178.5l-5-2v4zM258 301.5l5-2v4zM345 301.5l-5-2v4z" />
        <path d="M533 74l-2 6h4zM533 249l-2-6h4zM134 196l5 3l-2 2zM223 285l-5-3l2-2z" />
      </g>
      <g fill="#d9d52a" fontFamily="Liberation Sans, sans-serif" fontSize="6" fontWeight="700" textAnchor="middle">
        <text x="301" y="179">50</text>
        <text x="301" y="302">50</text>
        <text transform="translate(179 241) rotate(45)">70.71</text>
        <text transform="translate(533 161) rotate(-90)">100</text>
      </g>
      <g fill="none" stroke="#a0202c">
        <circle cx="169.5" cy="513" r="4" />
        <path d="M166 509L173 516M169.5 509V514" />
      </g>
      <circle cx="176.5" cy="424" r="10.5" fill="#a59a1e" />
      <path d="M166 424H188M176.5 413V435" stroke="#f3f1dc" strokeWidth="3" />
      <path d="M167 424H187M176.5 414V434" stroke="#1a1a10" />
      <circle cx="176.5" cy="424" r="2" fill="#a59a1e" />
    </Drawing>
  );
}

export default function App() {
  return (
    <Screen>
      <GlobalStyle />
      <Backdrop>
        <BackdropBand $h={56} $color="#2b3f4a" />
        <BackdropBand $h={359} $color="#e6ebee" />
        <BackdropBand $h={3} $color="#111" />
        <BackdropBand $h={10} $color="#e6ebee" />
        <BackdropBand $h={7} $color="#111" />
        <BackdropBand $h={227} $color="#e6ebee" />
        <BackdropBand $h={36} $color="#0b3f86" />
        <BackdropBand $h={22} $color="#cdd2da" />
      </Backdrop>
      <Frame>
        <FrameInner>
          <TitleBar>
            <Logo />
            <AppTitle>LibreCAD</AppTitle>
            <CaptionButton aria-label="minimise">
              <svg width="8" height="8" stroke="#e8f4ff"><path d="M0 4.5H8" /></svg>
            </CaptionButton>
            <CaptionButton aria-label="maximise">
              <svg width="8" height="8" fill="none" stroke="#e8f4ff"><path d="M0.5 0.5H7.5V7.5H0.5Z" /></svg>
            </CaptionButton>
            <CaptionButton aria-label="close"><Cross color="#e8f4ff" size={9} w={1} /></CaptionButton>
          </TitleBar>
          <MenuBar>
            {MENUS.map((m) => <MenuItem key={m}>{m}</MenuItem>)}
          </MenuBar>

          <ToolBar $h={25}>
            <Handle />
            <Tools names={["cursor"]} w={22} on="cursor" />
            <Drop on />
            <Handle />
            <Tools names={["newDoc", "newTemplate", "open", "save", "saveAs", "saveGray", "print", "preview"]} w={174} />
            <Handle $edge />
            <Tools names={["pointer", "pointerAsk"]} w={44} />
            <Divider />
            <Tools names={["windowSwap", "windowGray"]} w={44} />
            <Divider />
            <Tools names={["selectArea", "layers", "layerAdd", "layersAdd"]} w={88} />
            <Handle $edge />
            <Tools names={["grid"]} w={22} on="grid" />
            <Tools names={["draft", "lineWeight"]} w={44} />
            <Tools names={["halfCircle"]} w={22} on="halfCircle" />
            <Divider />
            <Tools names={["zoomRedraw", "zoomPan", "zoomIn", "zoomAuto", "zoomPrev", "zoomWindow", "zoomAll"]} w={153} />
            <Handle $edge />
            <Tools names={["saveView"]} w={22} />
            <Drop />
            <Tools names={["dockView"]} w={22} />
            <Drop />
            <Handle $edge />
            <Tools names={["gear", "docGear"]} w={44} />
            <Handle $edge />
            <Tools names={["angle"]} w={16} />
            <Divider />
            <TwoLine>Base Angle:<br />21.00°</TwoLine>
          </ToolBar>

          <ToolBar $h={24}>
            <Handle />
            <Combo $w={87}>
              <Swatch $h={8} />
              <ComboSelect aria-label="Colour"><option>By Layer</option></ComboSelect>
              <Chevron />
            </Combo>
            <Combo $w={73}>
              <Swatch $h={2} />
              <ComboSelect aria-label="Width"><option>By Layer</option></ComboSelect>
              <Chevron />
            </Combo>
            <Combo $w={91}>
              <Swatch $h={1} $color="#555" />
              <ComboSelect aria-label="Line type"><option>By Layer</option></ComboSelect>
              <Chevron />
            </Combo>
            <Tools names={["back", "handA", "handB", "pin", "pins"]} w={108} />
            <Handle $edge />
            <Tools names={["cornerDot", "eyeOff"]} w={44} />
            <Drop />
            <Handle $edge />
            <Tools names={["pentagon"]} w={18} />
            <Divider />
            <Field>
              Number:
              <Spinner>
                <SpinInput aria-label="Number" defaultValue="6" />
                <SpinArrows>
                  <SpinButton aria-label="up"><Triangle /></SpinButton>
                  <SpinButton aria-label="down"><Triangle /></SpinButton>
                </SpinArrows>
              </Spinner>
            </Field>
            <Divider />
            <Field $tick><Tick type="checkbox" defaultChecked />Polyline</Field>
            <Divider />
            <Field $tick><Tick type="checkbox" />Radius</Field>
            <TextBox aria-label="Radius value" defaultValue="20" />
            <Tools names={["plusMinus"]} w={22} />
          </ToolBar>

          <Body>
            <DockArea>
              {DOCKS.map((d) => <Dock key={d.title} {...d} />)}
            </DockArea>
            <Documents>
              <DocTabs>
                <DocTab>
                  <Icon name="docTab" size={10} />
                  unnamed document 1*
                  <CloseDoc aria-label="close document"><Cross color="#fff" size={6} /></CloseDoc>
                </DocTab>
              </DocTabs>
              <ViewGrid>
                <Sheet />
                <ScrollTrack $v>
                  <ScrollButton aria-label="up"><Chevron turn={180} /></ScrollButton>
                  <ScrollSpace $f={59} />
                  <ScrollThumb $f={490} />
                  <ScrollButton aria-label="down"><Chevron /></ScrollButton>
                </ScrollTrack>
                <ScrollTrack>
                  <ScrollButton aria-label="left"><Chevron turn={90} /></ScrollButton>
                  <ScrollSpace $f={334} />
                  <ScrollThumb $f={266} />
                  <ScrollSpace $f={68} />
                  <ScrollButton aria-label="right"><Chevron turn={-90} /></ScrollButton>
                </ScrollTrack>
              </ViewGrid>
            </Documents>
          </Body>

          <StatusBar>
            <Handle $h={26} />
            <Group $n={1} $w={20}><ToolButton $label>Ex</ToolButton></Group>
            <Tools names={["snapBox", "snapCross", "snapGrid", "snapEnd", "snapEntity", "snapMid"]} w={132} on="snapGrid" />
            <More aria-label="more tools" $w={22}>»</More>
            <Handle $edge $h={26} />
            <StatusCell $w={132} $grow $line $pad={2}>250.0000 , -150.0000<br />291.5476 &lt; 308.04°</StatusCell>
            <StatusCell $w={134} $grow $pad={5}>@&nbsp; 0.0000 , 50.0000<br />@&nbsp; 50.0000 &lt; 69.00°</StatusCell>
            <Handle $edge $h={26} />
            <Tools names={["snapNone"]} w={22} />
            <Drop />
            <StatusCell $w={5} $line />
            <StatusCell $w={65} $pad={5}>
              <Counts>
                <thead><tr><th>Selected</th><th>Total Le</th></tr></thead>
                <tbody><tr><td>0</td><td>0</td></tr></tbody>
              </Counts>
            </StatusCell>
            <Handle $edge $h={26} />
            <StatusCell $w={79}>Current Layer<br />0</StatusCell>
            <Handle $edge $h={26} />
            <StatusCell $w={46} $pad={2}>Grid Status<br />10 / 50</StatusCell>
            <Handle $edge $h={26} />
            <Tools names={["wcs"]} w={14} />
            <Divider />
            <StatusCell $w={84}>WCS<br />0.0000, 0.0000 &lt; 0.00°</StatusCell>
            <Handle $edge $h={26} />
            <Tools names={["addList"]} w={20} />
            <More aria-label="more panels" $w={10}>»</More>
          </StatusBar>
        </FrameInner>
      </Frame>
    </Screen>
  );
}
